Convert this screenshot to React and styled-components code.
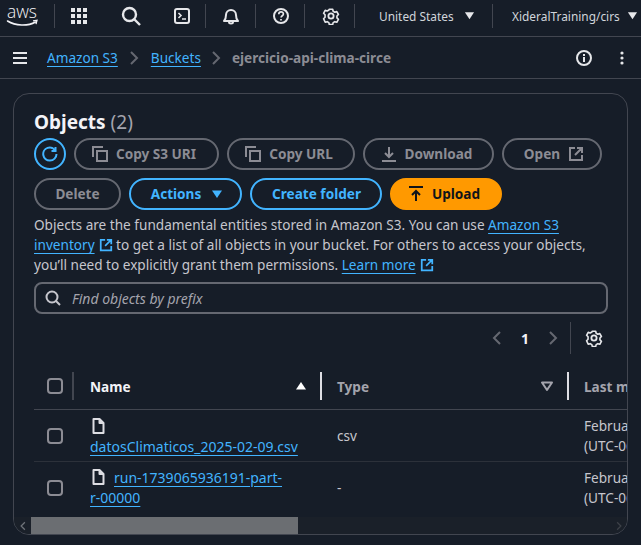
import React from "react";
import styled, { createGlobalStyle } from "styled-components";

const Global = createGlobalStyle`
  html, body { margin: 0; padding: 0; background: #161d28; height: 545px; overflow: hidden; }
  * { box-sizing: border-box; }
  body { font-family: "Noto Sans", "Open Sans", sans-serif; font-size: 13.6px; color: #c6c6cd; }
`;

const Page = styled.div`width: 641px; height: 545px; overflow: hidden; display: flex; flex-direction: column;`;

const TopBar = styled.header`
  height: 37px; flex: none; display: flex; align-items: center; padding-bottom: 5px;
  border-bottom: 1px solid #424650; color: #e6e7ea; white-space: nowrap;
`;
const TopCell = styled.div`
  width: ${p => p.$w}px; flex: none; height: 24px; display: flex; align-items: center;
  justify-content: ${p => p.$start ? "flex-start" : "center"};
  padding-left: ${p => p.$pl || 0}px;
  gap: ${p => p.$gap || 0}px;
  border-right: ${p => p.$line ? "1px solid #424650" : "none"};
  border-left: ${p => p.$lead ? "1px solid #424650" : "none"};
`;
const RegionText = styled.span`font-size: 11.9px; line-height: 18px; color: #d1d5db;`;
const Tick = styled.span`width: 1px; height: 5px; background: #424650; margin-left: -1px;`;

const CrumbBar = styled.nav`
  height: 42px; flex: none; display: flex; align-items: center;
  padding: 0 13px; border-bottom: 1px solid #424650;
`;
const CrumbList = styled.div`flex: 1; display: flex; align-items: center; margin-left: 20px;`;
const Crumb = styled.a`
  color: #42b4ff; font-size: 13.6px; line-height: 18px; text-decoration: underline; text-underline-offset: 3px;
  text-decoration-thickness: 1px;
`;
const CrumbSep = styled.span`display: flex; width: ${p => p.$w}px; justify-content: center; color: #656871;`;
const CrumbCurrent = styled.span`color: #8c8c94; font-weight: 700; font-size: 13.6px;`;
const CrumbActions = styled.div`display: flex; align-items: center; color: #e6e7ea; gap: 28px; padding-right: 4px;`;

const Card = styled.section`
  margin: 14px 0 0 13px; width: 615px; height: 442px; flex: none;
  border: 1px solid #424650; border-radius: 16px; overflow: hidden;
  display: flex; flex-direction: column; position: relative;
`;
const Head = styled.div`padding: 15px 20px 0 20px; display: flex; flex-direction: column;`;
const Title = styled.h2`
  margin: 0; font-size: 19px; line-height: 26px; font-weight: 700; color: #f3f3f7; height: 29px;
`;
const Count = styled.span`font-weight: 400; color: #a4a4ad;`;
const Buttons = styled.div`display: flex; flex-wrap: wrap; gap: 8px; width: 574px;`;
const Btn = styled.button`
  height: 32px; width: ${p => p.$w}px; border-radius: 16px; flex: none;
  padding: 0 ${p => p.$pr || 0}px 0 ${p => p.$pl || 0}px;
  display: flex; align-items: center; justify-content: center; gap: ${p => p.$gap ?? 8}px;
  font-family: inherit; font-size: 13.6px; font-weight: 700; line-height: 18px;
  background: ${p => p.$kind === "primary" ? "#ff9900" : "transparent"};
  border: 2px solid ${p => p.$kind === "primary" ? "#ff9900" : p.$kind === "normal" ? "#42b4ff" : "#656871"};
  color: ${p => p.$kind === "primary" ? "#0f141a" : p.$kind === "normal" ? "#42b4ff" : "#8c8c94"};
`;
const Desc = styled.p`margin: 5px 0 0; font-size: 13.6px; line-height: 20px; color: #c6c6cd; width: 574px; height: 60px; white-space: nowrap;`;
const TextLink = styled.a`
  color: #42b4ff; text-decoration: underline; text-underline-offset: 3px; text-decoration-thickness: 1px;
  display: ${p => p.$inline ? "inline-flex" : "inline"}; align-items: center; gap: 4px;
`;
const SearchBox = styled.div`
  margin-top: 7px; height: 32px; width: 574px; border: 2px solid #656871; border-radius: 8px;
  display: flex; align-items: center; gap: 11px; padding-left: 9px; color: #c6c6cd;
`;
const Placeholder = styled.span`font-style: italic; font-size: 14px; color: #a4a4ad;`;
const Pager = styled.div`
  margin-top: 8px; height: 32px; display: flex; align-items: center; justify-content: flex-end;
  padding-right: 5px; width: 574px;
`;
const PagerArrow = styled.span`color: #656871; display: flex;`;
const PageNo = styled.span`font-weight: 700; color: #f3f3f7; font-size: 14px; width: 40px; text-align: center;`;
const PagerGear = styled.div`
  height: 32px; border-left: 1px solid #424650; margin-left: 9px; padding-left: 14px;
  display: flex; align-items: center; color: #e6e7ea;
`;
const TableWrap = styled.div`margin-top: 18px; width: 613px; overflow: hidden; flex: 1; padding-left: 20px;`;
const HeadRow = styled.div`
  height: 38px; width: 700px; display: flex; align-items: center; padding-bottom: 9px;
  border-bottom: 1px solid #424650;
`;
const Row = styled.div`
  height: ${p => p.$h}px; width: 700px; display: flex; align-items: center;
  border-bottom: 1px solid ${p => p.$last ? "transparent" : "#2c313a"};
`;
const HeadCheckCell = styled.div`width: 38px; flex: none; display: flex; align-items: center; padding-left: 13px;`;
const CheckCell = styled(HeadCheckCell)`width: 40px;`;
const Check = styled.span`width: 16px; height: 16px; border: 2px solid #8c8c94; border-radius: 4px; display: block;`;
const Resizer = styled.span`
  width: 2px; height: 28px; flex: none; background: ${p => p.$bright ? "#dedee3" : "#424650"};
`;
const NameHead = styled.div`
  width: 246px; flex: none; padding: 0 13px 0 16px; display: flex; align-items: center; justify-content: space-between;
  font-weight: 700; color: #f3f3f7; font-size: 13.6px;
`;
const SortUp = styled.span`color: #fff; display: flex; transform: rotate(180deg);`;
const TypeHead = styled(NameHead)`width: 245px; color: #a4a4ad; padding: 0 14px 0 15px;`;
const LastHead = styled.div`padding-left: 15px; font-weight: 700; color: #a4a4ad; white-space: nowrap; font-size: 13.6px;`;
const NameCell = styled.div`
  width: 247px; flex: none; padding-left: 16px; line-height: 20px; font-size: 14px;
`;
const FileLink = styled.a`
  color: #42b4ff; text-decoration: underline; text-underline-offset: 3px; text-decoration-thickness: 1px;
`;
const FileGlyph = styled.span`display: block; height: 22px; color: #dedee3; line-height: 0; padding-top: 3px; padding-left: 2px;`;
const FileGlyphInline = styled.span`color: #dedee3; margin: 0 9px 0 2px; vertical-align: -2px; display: inline-block; line-height: 0;`;
const TypeCell = styled.div`width: 247px; flex: none; padding-left: 16px; color: #c6c6cd; font-size: 13.6px;`;
const DateCell = styled.div`padding-left: 16px; line-height: 20px; white-space: nowrap; color: #c6c6cd; font-size: 13.6px;`;
const Scrollbar = styled.div`
  position: absolute; left: 0; right: 0; bottom: 0; height: 17px; background: #1a2029; display: flex; align-items: center;
`;
const ScrollArrow = styled.span`width: 17px; flex: none; display: flex; justify-content: center; color: ${p => p.$dim ? "#3c4047" : "#6e7278"};`;
const ScrollThumb = styled.span`width: 267px; height: 17px; background: #6b6e72; flex: none;`;
const ScrollFill = styled.span`flex: 1;`;
const CaretBox = styled.span`display: flex;`;

const Svg = ({ s = 16, sw = 2, fill = "none", children }) => (
  <svg width={s} height={s} viewBox="0 0 16 16" fill={fill} stroke={fill === "none" ? "currentColor" : "none"} strokeWidth={sw} style={{ flex: "none", display: "block" }}>{children}</svg>
);
const Caret = ({ s = 12, outline }) => (
  <svg width={s} height={s} viewBox="0 0 12 12" style={{ flex: "none", display: "block" }}>
    <path d="M1 2.500h10L6 10z" fill={outline ? "none" : "currentColor"} stroke="currentColor" strokeWidth={outline ? 2 : 0} strokeLinejoin="round" />
  </svg>
);
const Gear = ({ s = 18 }) => (
  <svg width={s} height={s} viewBox="0 0 24 24" fill="none" stroke="currentColor" strokeWidth="2.400" strokeLinejoin="round" style={{ flex: "none", display: "block" }}>
    <circle cx="12" cy="12" r="3.500" />
    <path d="M9.500 2h5l.7 3 2.400 1.400 3-.9 2.400 4.300-2.200 2.200v2.800l2.200 2.200-2.400 4.300-3-.9-2.400 1.400-.7 3h-5l-.7-3-2.400-1.400-3 .9L1 16l2.200-2.200v-3.600L1 8l2.400-4.300 3 .9 2.400-1.400z" transform="translate(1.200 1.200) scale(.9)" />
  </svg>
);
const Copy = () => <Svg><path d="M1 11V1h10M5 5h10v10H5z" /></Svg>;
const External = ({ s = 16 }) => <Svg s={s}><path d="M7 2H2v12h12V9M9 2h5v5M14 2L7 9" /></Svg>;
const FileIcon = () => (
  <svg width="13" height="16" viewBox="0 0 13 16" fill="none" stroke="currentColor" strokeWidth="2" strokeLinejoin="round" style={{ display: "inline-block" }}>
    <path d="M1.500 1h6l4 4v10h-10zM7.500 1v4h4" />
  </svg>
);
const ChevronR = ({ s = 16 }) => <Svg s={s}><path d="M5 2l6 6-6 6" /></Svg>;
const ChevronL = ({ s = 16 }) => <Svg s={s}><path d="M11 2L5 8l6 6" /></Svg>;

const AwsLogo = () => (
  <svg width="34" height="24" viewBox="0 0 34 24" style={{ display: "block", overflow: "visible" }}>
    <text x="0" y="13.500" fontFamily="'Open Sans', sans-serif" fontWeight="300" fontSize="18" fill="#f3f3f7" textLength="30" lengthAdjust="spacingAndGlyphs">aws</text>
    <path d="M0.500 17c8 5 20 5.500 28 1" fill="none" stroke="#f3f3f7" strokeWidth="1.500" strokeLinecap="round" />
    <path d="M26 16.800l4-.5-1 3.800" fill="none" stroke="#f3f3f7" strokeWidth="1.300" />
  </svg>
);
const Grid = () => (
  <svg width="16" height="16" viewBox="0 0 16 16" fill="currentColor" style={{ display: "block" }}>
    {[0, 6, 12].flatMap(y => [0, 6, 12].map(x => <rect key={`${x}${y}`} x={x} y={y} width="4" height="4" />))}
  </svg>
);

export default function App() {
  return (
    <Page>
      <Global />
      <TopBar>
        <TopCell $w={55} $line $start $pl={7}><AwsLogo /></TopCell>
        <TopCell $w={48}><Grid /></TopCell>
        <TopCell $w={55}>
          <svg width="20" height="20" viewBox="0 0 20 20" fill="none" stroke="currentColor" strokeWidth="2.400" style={{ display: "block" }}><circle cx="8.500" cy="8.500" r="6.500" /><path d="M13.500 13.500L19 19" /></svg>
        </TopCell>
        <Tick />
        <TopCell $w={49} $line $pl={2}>
          <Svg><rect x="1" y="1" width="14" height="14" rx="2" /><path d="M4.500 5l2.500 2.500L4.500 10M8 11h4" strokeWidth="1.600" /></Svg>
        </TopCell>
        <TopCell $w={50} $line>
          <svg width="18" height="18" viewBox="0 0 18 18" fill="none" stroke="currentColor" strokeWidth="2" style={{ display: "block" }}><path d="M2 14c2-2 2-3 2-6a5 5 0 0110 0c0 3 0 4 2 6z" strokeLinejoin="round" /><path d="M7 15c0 2 4 2 4 0" /></svg>
        </TopCell>
        <TopCell $w={49} $line $pl={2}>
          <svg width="16" height="16" viewBox="0 0 16 16" fill="none" stroke="currentColor" strokeWidth="2" style={{ display: "block" }}><circle cx="8" cy="8" r="7" /><path d="M5.800 6.200c0-3 4.600-3 4.600-.2 0 1.800-2.300 1.700-2.300 3.500" strokeWidth="1.700" /><path d="M8 11v1.500" strokeWidth="1.700" /></svg>
        </TopCell>
        <TopCell $w={50} $line $pl={2}><Gear /></TopCell>
        <TopCell $w={137} $start $pl={24} $gap={10}>
          <RegionText>United States</RegionText>
          <Caret s={11} />
        </TopCell>
        <TopCell $w={149} $start $pl={19} $gap={7} $lead>
          <RegionText>XideralTraining/cirs</RegionText>
          <Caret s={11} />
        </TopCell>
      </TopBar>

      <CrumbBar>
        <svg width="14" height="12" viewBox="0 0 14 12" stroke="#e6e7ea" strokeWidth="2" style={{ display: "block", flex: "none" }}><path d="M0 1h14M0 6h14M0 11h14" /></svg>
        <CrumbList>
          <Crumb>Amazon S3</Crumb>
          <CrumbSep $w={33}><ChevronR /></CrumbSep>
          <Crumb>Buckets</Crumb>
          <CrumbSep $w={31}><ChevronR /></CrumbSep>
          <CrumbCurrent>ejercicio-api-clima-circe</CrumbCurrent>
        </CrumbList>
        <CrumbActions>
          <svg width="16" height="16" viewBox="0 0 16 16" fill="none" stroke="currentColor" strokeWidth="2" style={{ display: "block" }}><circle cx="8" cy="8" r="7" /><path d="M8 7v5M8 4v2" /></svg>
          <svg width="4" height="14" viewBox="0 0 4 14" fill="currentColor" style={{ display: "block" }}><circle cx="2" cy="2" r="1.600" /><circle cx="2" cy="7" r="1.600" /><circle cx="2" cy="12" r="1.600" /></svg>
        </CrumbActions>
      </CrumbBar>

      <Card>
        <Head>
          <Title>Objects <Count>(2)</Count></Title>
          <Buttons>
            <Btn $kind="normal" $w={32}>
              <Svg><path d="M13.500 5A6.500 6.500 0 108 14.500 6.500 6.500 0 0014.500 8" /><path d="M13.500 1v4h-4" /></Svg>
            </Btn>
            <Btn $w={145} $pr={5}><Copy />Copy S3 URI</Btn>
            <Btn $w={128} $pr={4}><Copy />Copy URL</Btn>
            <Btn $w={131} $pr={4}><Svg><path d="M8 1v10M4 7l4 4 4-4M1 15h14" /></Svg>Download</Btn>
            <Btn $w={100} $pl={4}>Open<External /></Btn>
            <Btn $w={87}>Delete</Btn>
            <Btn $kind="normal" $w={113} $gap={10} $pl={3}>Actions<CaretBox><Caret /></CaretBox></Btn>
            <Btn $kind="normal" $w={132} $pl={1}>Create folder</Btn>
            <Btn $kind="primary" $w={112} $pr={4}><Svg><path d="M1 1h14M8 15V5M4 9l4-4 4 4" /></Svg>Upload</Btn>
          </Buttons>
          <Desc>
            Objects are the fundamental entities stored in Amazon S3. You can use <TextLink>Amazon S3</TextLink><br />
            <TextLink $inline>inventory <External s={14} /></TextLink> to get a list of all objects in your bucket. For others to access your objects,<br />
            you’ll need to explicitly grant them permissions. <TextLink $inline>Learn more <External s={14} /></TextLink>
          </Desc>
          <SearchBox>
            <Svg s={16}><circle cx="7" cy="7" r="5.500" /><path d="M11 11l4 4" /></Svg>
            <Placeholder>Find objects by prefix</Placeholder>
          </SearchBox>
          <Pager>
            <PagerArrow><ChevronL /></PagerArrow>
            <PageNo>1</PageNo>
            <PagerArrow><ChevronR /></PagerArrow>
            <PagerGear><Gear /></PagerGear>
          </Pager>
        </Head>
        <TableWrap>
          <HeadRow>
            <HeadCheckCell><Check /></HeadCheckCell>
            <Resizer />
            <NameHead>Name<SortUp><Caret /></SortUp></NameHead>
            <Resizer $bright />
            <TypeHead>Type<Caret outline /></TypeHead>
            <Resizer $bright />
            <LastHead>Last modified</LastHead>
          </HeadRow>
          <Row $h={52}>
            <CheckCell><Check /></CheckCell>
            <NameCell>
              <FileGlyph><FileIcon /></FileGlyph>
              <FileLink>datosClimaticos_2025-02-09.csv</FileLink>
            </NameCell>
            <TypeCell>csv</TypeCell>
            <DateCell>February 9, 2025, 00:00:00<br />(UTC-06:00)</DateCell>
          </Row>
          <Row $h={52} $last>
            <CheckCell><Check /></CheckCell>
            <NameCell>
              <FileGlyphInline><FileIcon /></FileGlyphInline>
              <FileLink>run-1739065936191-part-<br />r-00000</FileLink>
            </NameCell>
            <TypeCell>-</TypeCell>
            <DateCell>February 9, 2025, 00:00:00<br />(UTC-06:00)</DateCell>
          </Row>
        </TableWrap>
        <Scrollbar>
          <ScrollArrow><ChevronL s={10} /></ScrollArrow>
          <ScrollThumb />
          <ScrollFill />
          <ScrollArrow $dim><ChevronR s={10} /></ScrollArrow>
        </Scrollbar>
      </Card>
    </Page>
  );
}
